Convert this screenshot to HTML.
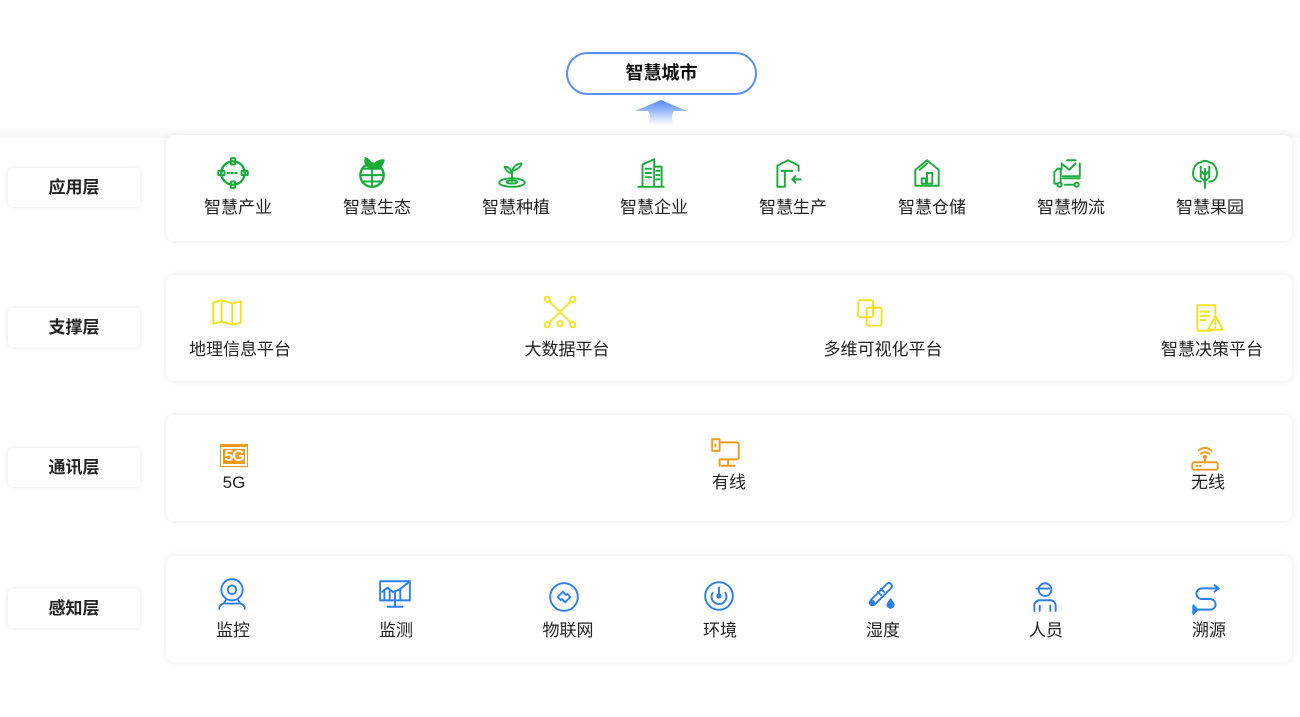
<!DOCTYPE html>
<html><head><meta charset="utf-8"><style>
*{margin:0;padding:0;box-sizing:border-box}
body{width:1300px;height:717px;background:#fff;position:relative;overflow:hidden;font-family:"Liberation Sans","Noto Sans CJK SC",sans-serif;color:#222}
.lab{position:absolute;left:8px;width:132px;height:39px;background:#fff;border-radius:4px;box-shadow:0 0 6px rgba(0,0,0,0.10);font-size:17px;font-weight:bold;text-align:center;line-height:39px;color:#222}
.pan{position:absolute;left:166px;width:1126px;height:106px;background:#fff;border-radius:8px;box-shadow:0 0 8px rgba(0,0,0,0.09)}
.t{position:absolute;font-size:17px;transform:translateX(-50%);white-space:nowrap;line-height:19px;color:#222}
.i{position:absolute;width:34px;height:34px;transform:translate(-50%,-50%);fill:none;stroke-width:1.8;stroke-linecap:round;stroke-linejoin:round}
.g{stroke:#18ad3b}.y{stroke:#f3e11e}.o{stroke:#f09a1a}.b{stroke:#2a7ff0}
</style></head><body>
<div style="position:absolute;left:566px;top:52px;width:191px;height:43px;border:2.5px solid #5b8ff5;border-radius:22px;text-align:center;line-height:38px;font-size:18px;font-weight:bold;color:#111">智慧城市</div>
<svg style="position:absolute;left:630px;top:98px" width="64" height="30"><defs><linearGradient id="ag" x1="0" y1="0" x2="0" y2="1"><stop offset="0" stop-color="#4f86f7"/><stop offset="1" stop-color="#4f86f7" stop-opacity="0"/></linearGradient></defs><path d="M31 2 L57 13 L44 13 Q40 18 44 27 L18 27 Q22 18 18 13 L5 13 Z" fill="url(#ag)"/></svg>
<div style="position:absolute;left:0;top:128px;width:1300px;height:10px;background:linear-gradient(#fff,#f6f6f6)"></div>

<div class="pan" style="top:135px"></div>
<div class="pan" style="top:275px"></div>
<div class="pan" style="top:415px"></div>
<div class="pan" style="top:556px"></div>
<div class="lab" style="top:168px">应用层</div>
<div class="lab" style="top:308px">支撑层</div>
<div class="lab" style="top:448px">通讯层</div>
<div class="lab" style="top:589px">感知层</div>

<!-- row1 -->
<svg class="i g" style="left:233px;top:173px" viewBox="0 0 32 32"><circle cx="16" cy="16" r="11" stroke-width="2.2"/><rect x="14" y="2" width="4" height="6" rx="1"/><rect x="14" y="24" width="4" height="6" rx="1"/><rect x="2" y="14" width="6" height="4" rx="1"/><rect x="24" y="14" width="6" height="4" rx="1"/><path d="M11 16h10" stroke-dasharray="1.5 2"/></svg>
<svg class="i g" style="left:372px;top:173px" viewBox="0 0 32 32"><circle cx="16" cy="18" r="11" stroke-width="2.2"/><path d="M5 18h22M16 12v17M8 12h16M8 24h16"/><path d="M16 12 C10 10 9 6 10 2 C14 4 16 7 16 12Z M16 12 C18 6 22 4 27 4 C26 9 22 12 16 12Z" fill="#18ad3b"/></svg>
<svg class="i g" style="left:512px;top:173px" viewBox="0 0 32 32"><ellipse cx="16" cy="25" rx="12" ry="4"/><ellipse cx="16" cy="24.5" rx="5" ry="1.5"/><path d="M16 24V14 M16 16 C12 16 10 13 9 10 C12 10 15 12 16 16 M16 14 C18 9 21 7 25 7 C24 11 20 13 16 14"/></svg>
<svg class="i g" style="left:651px;top:173px" viewBox="0 0 32 32"><path d="M4 29h24M8 29V8l11-5v26M19 10h7v19M11 12h5M11 16h5M11 20h5M21 14h3M21 18h3M21 22h3"/></svg>
<svg class="i g" style="left:788px;top:173px" viewBox="0 0 32 32"><path d="M26 14V9L16 4 6 9v20h6M10 14h10M13 14v15M28 22h-8m3-3-3 3 3 3"/></svg>
<svg class="i g" style="left:927px;top:173px" viewBox="0 0 32 32"><path d="M5 28V13L16 4l11 9v15zM9 13l7-6"/><rect x="11" y="21" width="4" height="5"/><rect x="16" y="16" width="5" height="10"/></svg>
<svg class="i g" style="left:1066px;top:173px" viewBox="0 0 32 32"><path d="M7 26h-2V15l3-3h3v14M13 21h16M12 12V7M17 4h8M29 7v12H13M13 8l6 5 6-6"/><circle cx="10" cy="27" r="2"/><circle cx="26" cy="27" r="2"/><path d="M15 27h8"/></svg>
<svg class="i g" style="left:1205px;top:173px" viewBox="0 0 32 32"><path d="M12 24C6 24 4 19 5 14 6 9 9 6 12 6c2-2 6-2 8 0 3 0 6 3 7 8 1 5-1 10-7 10M16 30V12M12 20l4 4 4-4M12 14l4 4M20 14l-4 4M12 10v10M20 10v10"/></svg>
<div class="t" style="left:238px;top:198px">智慧产业</div>
<div class="t" style="left:377px;top:198px">智慧生态</div>
<div class="t" style="left:516px;top:198px">智慧种植</div>
<div class="t" style="left:654px;top:198px">智慧企业</div>
<div class="t" style="left:793px;top:198px">智慧生产</div>
<div class="t" style="left:932px;top:198px">智慧仓储</div>
<div class="t" style="left:1071px;top:198px">智慧物流</div>
<div class="t" style="left:1210px;top:198px">智慧果园</div>

<!-- row2 -->
<svg class="i y" style="left:227px;top:312px" viewBox="0 0 32 32" stroke-width="2.2"><path d="M3 7l8-2 10 3 8-2v20l-8 2-10-3-8 2zM11 5v20M21 8v20"/></svg>
<svg class="i y" style="left:560px;top:312px" viewBox="0 0 32 32" stroke-width="2"><path d="M4 4l24 24M28 4L4 28M16 16l-4 4M16 16l4 4"/><circle cx="4" cy="4" r="2.5" fill="#fff"/><circle cx="28" cy="4" r="2.5" fill="#fff"/><circle cx="4" cy="28" r="2.5" fill="#fff"/><circle cx="28" cy="28" r="2.5" fill="#fff"/><circle cx="16" cy="27" r="2.5" fill="#fff"/></svg>
<svg class="i y" style="left:872px;top:314px" viewBox="0 0 32 32" stroke-width="2.6"><rect x="3" y="3" width="14" height="16" rx="2"/><rect x="11" y="10" width="14" height="17" rx="2"/></svg>
<svg class="i y" style="left:1209px;top:318px" viewBox="0 0 32 32" stroke-width="1.8"><path d="M18 28H5V4h17v12M8 10h8M8 14h8M8 18h5M22 14l-7 13h14z M22 18v4M22 24v1"/></svg>
<div class="t" style="left:240px;top:340px">地理信息平台</div>
<div class="t" style="left:567px;top:340px">大数据平台</div>
<div class="t" style="left:883px;top:340px">多维可视化平台</div>
<div class="t" style="left:1212px;top:340px">智慧决策平台</div>

<!-- row3 -->
<div style="position:absolute;left:220px;top:444px;width:28px;height:23px;background:#f09a1a;color:#fff;font:bold 18px/23px 'Liberation Sans',sans-serif;text-align:center;letter-spacing:-1px"><span style="display:inline-block;background:#f09a1a;border:2px solid #fff;margin-top:2px;line-height:15px;font-size:16px;padding:0 1px">5G</span></div>
<div class="t" style="left:234px;top:473px">5G</div>
<svg class="i o" style="left:726px;top:453px" viewBox="0 0 32 32" stroke-width="2"><path d="M10 6h16a2 2 0 012 2v12a2 2 0 01-2 2H10M18 22v6M12 28h12M10 22v6"/><rect x="3" y="3" width="7" height="11"/><path d="M6 8v2"/></svg>
<div class="t" style="left:729px;top:473px">有线</div>
<svg class="i o" style="left:1205px;top:458px" viewBox="0 0 32 32" stroke-width="1.8"><rect x="4" y="20" width="24" height="7" rx="2"/><path d="M8 23.5h1M11 23.5h1M16 20v-4M10 9q6-5 12 0M12 12q4-3 8 0"/><circle cx="16" cy="15" r="1"/></svg>
<div class="t" style="left:1208px;top:473px">无线</div>

<!-- row4 -->
<svg class="i b" style="left:232px;top:594px" viewBox="0 0 32 32" stroke-width="2"><circle cx="16" cy="12" r="10"/><circle cx="16" cy="12" r="4"/><path d="M10 22l-2 3c-3 1-4 3-4 5M22 22l2 3c3 1 4 3 4 5M10 25h12"/></svg>
<svg class="i b" style="left:395px;top:594px" viewBox="0 0 32 32" stroke-width="2"><rect x="2" y="4" width="28" height="18"/><path d="M16 22v6M9 28h14M4 14l5-4 5 4 6-2 5-4 4-3M6 12v10M11 12v10M16 14v8M21 12v10"/></svg>
<svg class="i b" style="left:564px;top:597px" viewBox="0 0 32 32" stroke-width="2"><circle cx="16" cy="16" r="13"/><path d="M10 16l5-5 3 3M22 16l-5 5-3-3M13 19l-3-3M19 13l3 3"/></svg>
<svg class="i b" style="left:719px;top:596px" viewBox="0 0 32 32" stroke-width="2"><circle cx="16" cy="16" r="13"/><path d="M10 13a7 7 0 1012 0M16 8v8"/><circle cx="16" cy="16" r="1.5"/></svg>
<svg class="i b" style="left:881px;top:594px" viewBox="0 0 32 32" stroke-width="2"><path d="M6 26a4 4 0 005-1L26 10a3 3 0 00-4-4L7 21a4 4 0 00-1 5zM13 14l3 3M16 11l3 3"/><circle cx="8" cy="24" r="1.5" fill="#2a7ff0"/><path d="M25 21l3 5a3 3 0 11-6 0z" fill="#2a7ff0"/></svg>
<svg class="i b" style="left:1045px;top:596px" viewBox="0 0 32 32" stroke-width="2.2"><circle cx="16" cy="10" r="6"/><path d="M8 9h12M6 30v-5a5 5 0 015-5h10a5 5 0 015 5v5M11 30v-5M21 30v-5"/></svg>
<svg class="i b" style="left:1206px;top:599px" viewBox="0 0 32 32" stroke-width="2.2"><path d="M28 6H12a5 5 0 000 10h8a5 5 0 010 10H6M24 3l4 3-4 3" /><path d="M4 22v8l4-4z" fill="#2a7ff0"/></svg>
<div class="t" style="left:233px;top:621px">监控</div>
<div class="t" style="left:396px;top:621px">监测</div>
<div class="t" style="left:568px;top:621px">物联网</div>
<div class="t" style="left:720px;top:621px">环境</div>
<div class="t" style="left:883px;top:621px">湿度</div>
<div class="t" style="left:1046px;top:621px">人员</div>
<div class="t" style="left:1209px;top:621px">溯源</div>
</body></html>
